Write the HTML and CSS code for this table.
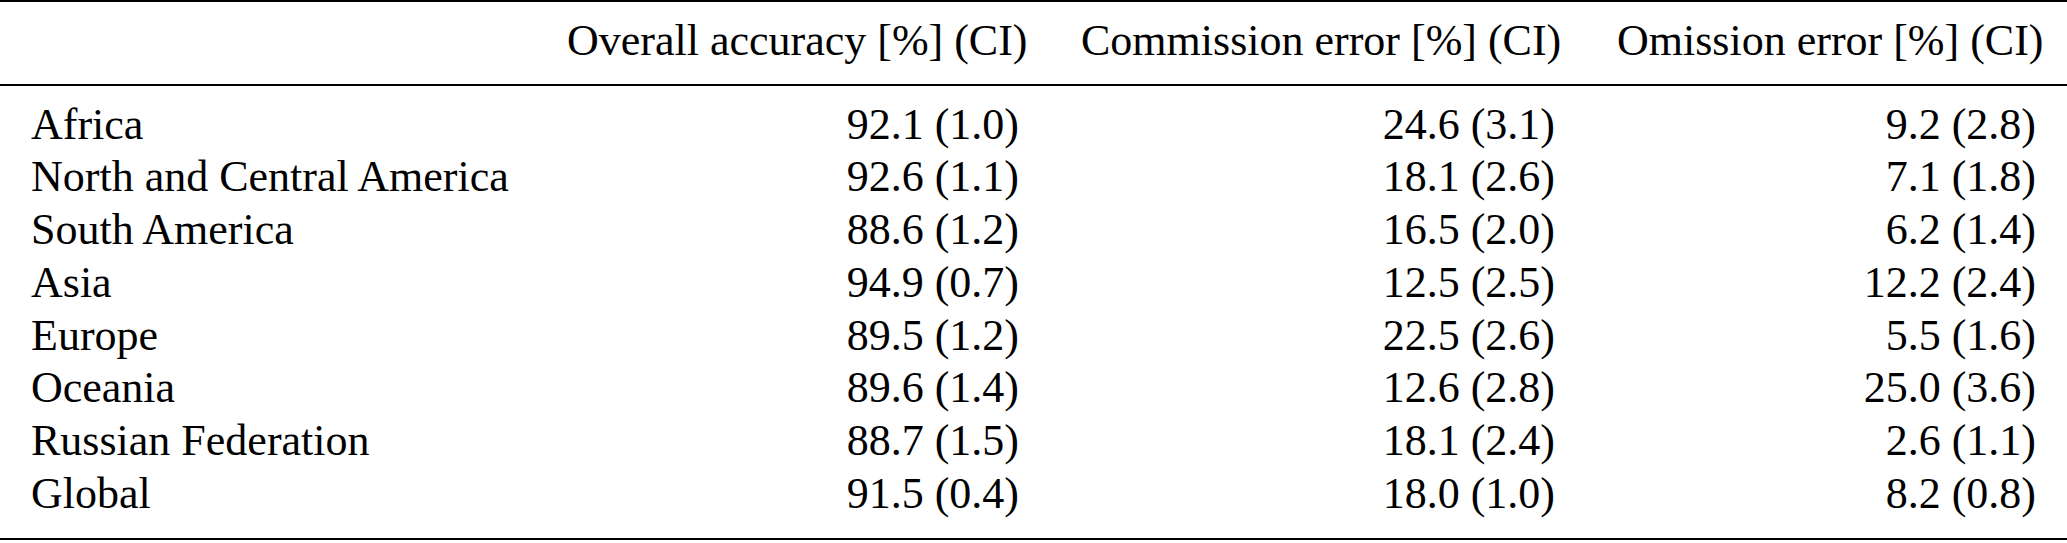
FILE: index.html
```html
<!DOCTYPE html>
<html>
<head>
<meta charset="utf-8">
<link rel="stylesheet" href="styles.css">
</head>
<body>
<table class="results">
  <colgroup>
    <col class="c-region">
    <col class="c-oa">
    <col class="c-ce">
    <col class="c-oe">
  </colgroup>
  <thead>
    <tr>
      <th class="label"></th>
      <th>Overall accuracy [%] (CI)</th>
      <th>Commission error [%] (CI)</th>
      <th>Omission error [%] (CI)</th>
    </tr>
  </thead>
  <tbody>
    <tr><td class="label">Africa</td><td>92.1 (1.0)</td><td>24.6 (3.1)</td><td>9.2 (2.8)</td></tr>
    <tr><td class="label">North and Central America</td><td>92.6 (1.1)</td><td>18.1 (2.6)</td><td>7.1 (1.8)</td></tr>
    <tr><td class="label">South America</td><td>88.6 (1.2)</td><td>16.5 (2.0)</td><td>6.2 (1.4)</td></tr>
    <tr><td class="label">Asia</td><td>94.9 (0.7)</td><td>12.5 (2.5)</td><td>12.2 (2.4)</td></tr>
    <tr><td class="label">Europe</td><td>89.5 (1.2)</td><td>22.5 (2.6)</td><td>5.5 (1.6)</td></tr>
    <tr><td class="label">Oceania</td><td>89.6 (1.4)</td><td>12.6 (2.8)</td><td>25.0 (3.6)</td></tr>
    <tr><td class="label">Russian Federation</td><td>88.7 (1.5)</td><td>18.1 (2.4)</td><td>2.6 (1.1)</td></tr>
    <tr><td class="label">Global</td><td>91.5 (0.4)</td><td>18.0 (1.0)</td><td>8.2 (0.8)</td></tr>
  </tbody>
</table>
</body>
</html>
```
FILE: styles.css
```css
html, body {
  margin: 0;
  padding: 0;
  background: #fff;
}

.results {
  width: 2067px;
  table-layout: fixed;
  border-collapse: separate;
  border-spacing: 0;
  border-top: 2px solid #000;
  border-bottom: 2px solid #000;
  font-family: "Liberation Serif", "Times New Roman", serif;
  font-size: 44px;
  line-height: 52.7px;
  color: #000;
}

.c-region { width: 536px; }
.c-oa { width: 514px; }
.c-ce { width: 536px; }
.c-oe { width: 481px; }

.results th,
.results td {
  padding: 0 31px;
  text-align: right;
  font-weight: normal;
  white-space: nowrap;
}

.results th {
  padding-top: 13px;
  padding-bottom: 16px;
  border-bottom: 2px solid #000;
}

.results .label {
  text-align: left;
}

.results tbody tr:first-child td {
  padding-top: 13px;
}

.results tbody tr:last-child td {
  padding-bottom: 18px;
}
```
